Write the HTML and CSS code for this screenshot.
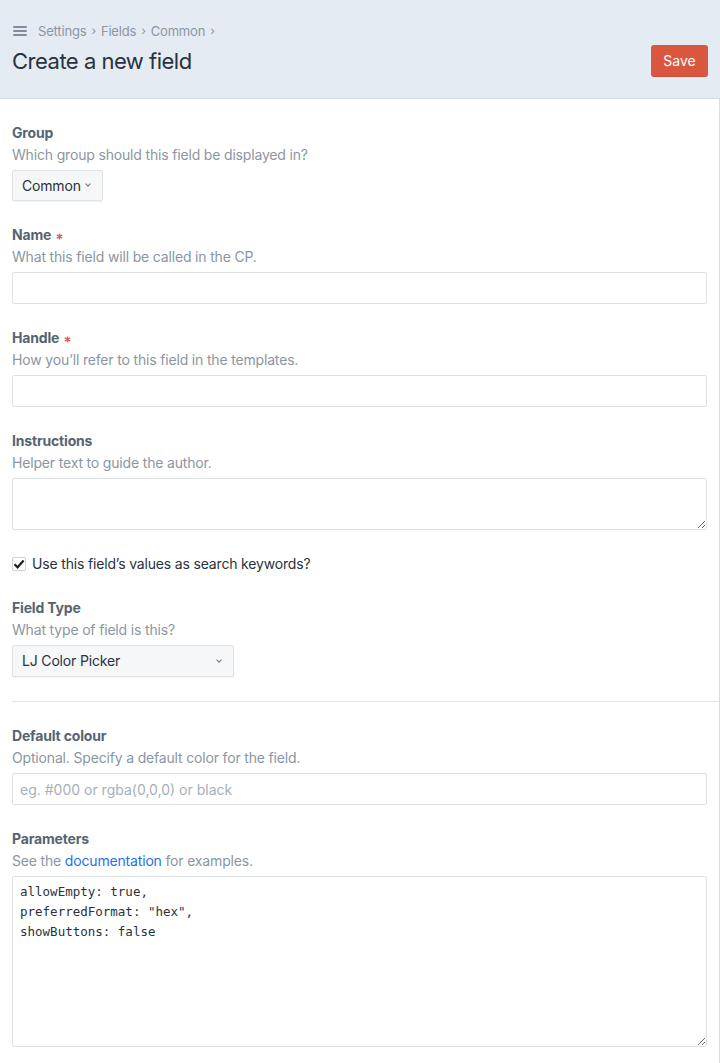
FILE: index.html
```html
<!DOCTYPE html>
<html lang="en">
<head>
<meta charset="utf-8">
<title>Create a new field</title>
<link rel="stylesheet" href="styles.css">
</head>
<body>
<div class="page">
  <header class="header">
    <nav class="crumbs">
      <span class="burger"><span></span><span></span><span></span></span>
      <span class="crumb">Settings</span><span class="sep">›</span>
      <span class="crumb">Fields</span><span class="sep">›</span>
      <span class="crumb">Common</span><span class="sep">›</span>
    </nav>
    <div class="title-row">
      <h1 class="title">Create a new field</h1>
      <button class="btn-save">Save</button>
    </div>
  </header>
  <main class="content">
    <div class="field">
      <div class="label">Group</div>
      <div class="instr">Which group should this field be displayed in?</div>
      <div class="select select-group"><span>Common</span><i class="chev"></i></div>
    </div>
    <div class="field">
      <div class="label">Name <svg class="req" viewBox="0 0 8 8" width="7" height="7"><path d="M4 0.5V7.5M0.9 2.2L7.1 5.8M0.9 5.8L7.1 2.2" stroke="#e0604e" stroke-width="1.6"/></svg></div>
      <div class="instr">What this field will be called in the CP.</div>
      <input class="text" type="text">
    </div>
    <div class="field">
      <div class="label">Handle <svg class="req" viewBox="0 0 8 8" width="7" height="7"><path d="M4 0.5V7.5M0.9 2.2L7.1 5.8M0.9 5.8L7.1 2.2" stroke="#e0604e" stroke-width="1.6"/></svg></div>
      <div class="instr">How you’ll refer to this field in the templates.</div>
      <input class="text" type="text">
    </div>
    <div class="field">
      <div class="label">Instructions</div>
      <div class="instr">Helper text to guide the author.</div>
      <textarea class="text area-small"></textarea>
    </div>
    <div class="field checkrow">
      <span class="checkbox"><svg viewBox="0 0 12 12" width="12" height="12"><path d="M1.5 6.3 L4.6 9.3 L10.6 2.6" fill="none" stroke="#1c2229" stroke-width="2.2" stroke-linejoin="miter"/></svg></span>
      <span class="checklabel">Use this field’s values as search keywords?</span>
    </div>
    <div class="field">
      <div class="label">Field Type</div>
      <div class="instr">What type of field is this?</div>
      <div class="select select-type"><span>LJ Color Picker</span><i class="chev"></i></div>
    </div>
    <hr class="divider">
    <div class="field">
      <div class="label">Default colour</div>
      <div class="instr">Optional. Specify a default color for the field.</div>
      <input class="text" type="text" placeholder="eg. #000 or rgba(0,0,0) or black">
    </div>
    <div class="field">
      <div class="label">Parameters</div>
      <div class="instr">See the <a class="link" href="#">documentation</a> for examples.</div>
      <textarea class="text code">allowEmpty: true,
preferredFormat: "hex",
showButtons: false</textarea>
    </div>
  </main>
</div>
</body>
</html>
```

FILE: styles.css
```css
* { box-sizing: border-box; }
html, body { margin: 0; padding: 0; background: #fff; }
body {
  font-family: "Inter", "Liberation Sans", sans-serif;
  font-size: 14px;
  line-height: 20px;
  letter-spacing: -0.17px;
  color: #29323d;
}
.page { width: 720px; min-height: 1063px; }
.header {
  background: #e4ebf3;
  border-bottom: 1px solid #d3d8de;
  padding: 21px 12px 20px 12px;
  height: 99px;
}
.crumbs { display: flex; align-items: center; height: 20px; font-size: 13px; color: #8b96a2; }
.burger { display: flex; flex-direction: column; gap: 2px; width: 14px; margin: 0 11px 0 1px; }
.burger span { display: block; height: 2px; background: #838d99; border-radius: 1px; }
.sep { margin: 0 5px; font-size: 12px; }
.title-row { display: flex; align-items: center; justify-content: space-between; margin-top: 4px; height: 32px; }
.title { margin: 0; font-size: 22px; font-weight: 400; color: #29323d; letter-spacing: -0.5px; }
.btn-save {
  font: inherit; font-size: 14px; color: #fff; letter-spacing: 0;
  background: #d9573f; border: 0; border-radius: 3px;
  height: 32px; width: 57px; padding: 0;
  box-shadow: inset 0 -1px 0 rgba(0,0,0,0.08);
}
.content {
  padding: 24px 12px 0 12px;
  border-right: 1px solid #dadde0;
  min-height: 964px;
}
.field { margin-bottom: 24px; }
.label { font-weight: 700; color: #566472; display: flex; align-items: center; }
.req { margin-left: 5px; margin-top: 2px; }
.instr { color: #8b96a2; margin-top: 2px; margin-bottom: 5px; }
.link { color: #1a73e8; text-decoration: none; }
.text {
  display: block; width: 100%; height: 32px;
  font: inherit; color: #29323d;
  border: 1px solid #dfe2e5; border-radius: 2px;
  padding: 5px 7px; background: #fff; outline: none;
}
.text::placeholder { color: #a8b0b9; }
textarea.text { resize: vertical; }
.area-small { height: 52px; }
.code {
  height: 171px; margin-top: 2px;
  font-family: "DejaVu Sans Mono", "Liberation Mono", monospace;
  font-size: 12.5px; line-height: 20px; padding: 5px 7px; letter-spacing: 0;
}
.select {
  display: inline-flex; align-items: center; justify-content: space-between;
  height: 31px; padding: 0 10px 0 9px;
  background: #f5f7f9; border: 1px solid #e0e3e6; border-radius: 2px;
  box-shadow: 0 1px 1px rgba(0,0,0,0.06);
  color: #29323d;
}
.select-group { width: 91px; }
.select-type { width: 222px; height: 32px; }
.chev {
  display: inline-block; width: 4px; height: 4px;
  border-right: 1px solid #6b7682; border-bottom: 1px solid #6b7682;
  transform: rotate(45deg); margin-top: -3px; margin-right: 2px;
}
.checkrow { display: flex; align-items: center; height: 20px; }
.checkbox {
  width: 14px; height: 14px; border: 1px solid #cfd3d7; border-radius: 2px;
  display: inline-flex; align-items: center; justify-content: center; margin-right: 6px;
  background: #fff;
}
.checklabel { color: #29323d; }
.divider { border: 0; border-top: 1px solid #e3e5e8; margin: 0 -12px 24px 0; }
```
